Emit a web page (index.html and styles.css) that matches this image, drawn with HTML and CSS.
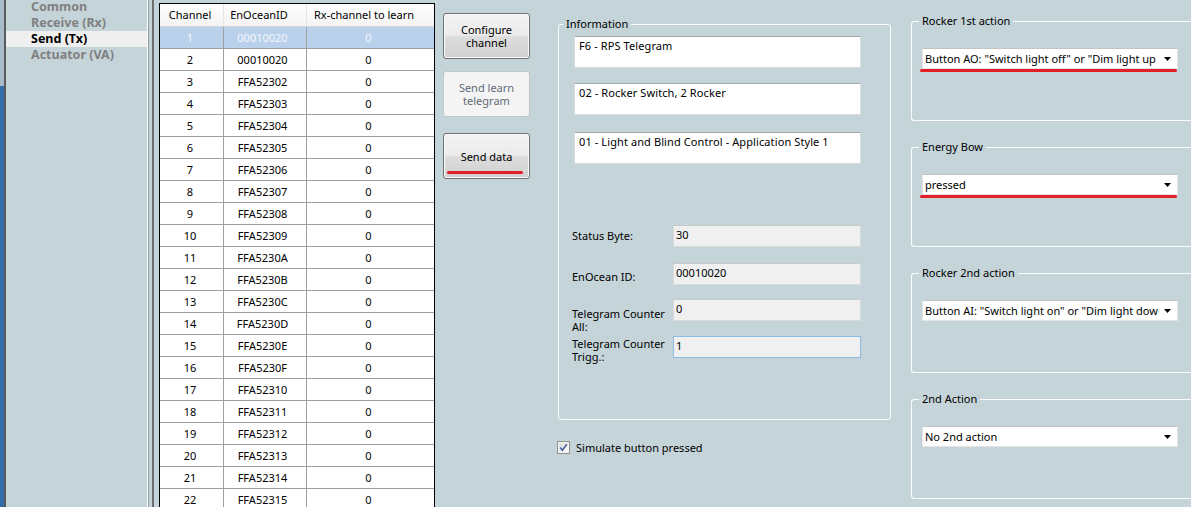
FILE: index.html
```html
<!DOCTYPE html>
<html>
<head>
<meta charset="utf-8">
<link rel="stylesheet" href="styles.css">
</head>
<body>
<div class="strip"></div>
<div class="nav">
  <div class="nav-item first">Common</div>
  <div class="nav-item">Receive (Rx)</div>
  <div class="nav-item active">Send (Tx)</div>
  <div class="nav-item">Actuator (VA)</div>
</div>
<div class="splitter"></div>

<div class="grid">
  <div class="ghead">
    <div class="hc c1">Channel</div>
    <div class="hc c2">EnOceanID</div>
    <div class="hc c3">Rx-channel to learn</div>
  </div>
  <div class="grow sel"><div class="gc c1">1</div><div class="gc c2">00010020</div><div class="gc c3">0</div></div>
  <div class="grow"><div class="gc c1">2</div><div class="gc c2">00010020</div><div class="gc c3">0</div></div>
  <div class="grow"><div class="gc c1">3</div><div class="gc c2">FFA52302</div><div class="gc c3">0</div></div>
  <div class="grow"><div class="gc c1">4</div><div class="gc c2">FFA52303</div><div class="gc c3">0</div></div>
  <div class="grow"><div class="gc c1">5</div><div class="gc c2">FFA52304</div><div class="gc c3">0</div></div>
  <div class="grow"><div class="gc c1">6</div><div class="gc c2">FFA52305</div><div class="gc c3">0</div></div>
  <div class="grow"><div class="gc c1">7</div><div class="gc c2">FFA52306</div><div class="gc c3">0</div></div>
  <div class="grow"><div class="gc c1">8</div><div class="gc c2">FFA52307</div><div class="gc c3">0</div></div>
  <div class="grow"><div class="gc c1">9</div><div class="gc c2">FFA52308</div><div class="gc c3">0</div></div>
  <div class="grow"><div class="gc c1">10</div><div class="gc c2">FFA52309</div><div class="gc c3">0</div></div>
  <div class="grow"><div class="gc c1">11</div><div class="gc c2">FFA5230A</div><div class="gc c3">0</div></div>
  <div class="grow"><div class="gc c1">12</div><div class="gc c2">FFA5230B</div><div class="gc c3">0</div></div>
  <div class="grow"><div class="gc c1">13</div><div class="gc c2">FFA5230C</div><div class="gc c3">0</div></div>
  <div class="grow"><div class="gc c1">14</div><div class="gc c2">FFA5230D</div><div class="gc c3">0</div></div>
  <div class="grow"><div class="gc c1">15</div><div class="gc c2">FFA5230E</div><div class="gc c3">0</div></div>
  <div class="grow"><div class="gc c1">16</div><div class="gc c2">FFA5230F</div><div class="gc c3">0</div></div>
  <div class="grow"><div class="gc c1">17</div><div class="gc c2">FFA52310</div><div class="gc c3">0</div></div>
  <div class="grow"><div class="gc c1">18</div><div class="gc c2">FFA52311</div><div class="gc c3">0</div></div>
  <div class="grow"><div class="gc c1">19</div><div class="gc c2">FFA52312</div><div class="gc c3">0</div></div>
  <div class="grow"><div class="gc c1">20</div><div class="gc c2">FFA52313</div><div class="gc c3">0</div></div>
  <div class="grow"><div class="gc c1">21</div><div class="gc c2">FFA52314</div><div class="gc c3">0</div></div>
  <div class="grow"><div class="gc c1">22</div><div class="gc c2">FFA52315</div><div class="gc c3">0</div></div>
</div>

<div class="buttons">
  <div class="btn b1">Configure<br>channel</div>
  <div class="btn b2 disabled">Send learn<br>telegram</div>
  <div class="btn b3">Send data<span class="redmark"></span></div>
</div>

<div class="infocol">
  <div class="group info">
    <div class="legend">Information</div>
    <div class="tbox t1">F6 - RPS Telegram</div>
    <div class="tbox t2">02 - Rocker Switch, 2 Rocker</div>
    <div class="tbox t3">01 - Light and Blind Control - Application Style 1</div>
    <div class="frow r1"><div class="flabel">Status Byte:</div><div class="field">30</div></div>
    <div class="frow r2"><div class="flabel">EnOcean ID:</div><div class="field">00010020</div></div>
    <div class="frow r3"><div class="flabel">Telegram Counter<br>All:</div><div class="field">0</div></div>
    <div class="frow r4"><div class="flabel">Telegram Counter<br>Trigg.:</div><div class="field focus">1</div></div>
  </div>
  <div class="check">
    <svg class="cbox" width="13" height="13" viewBox="0 0 13 13">
      <defs><linearGradient id="cg" x1="0" y1="0" x2="1" y2="1"><stop offset="0" stop-color="#dcdcdc"/><stop offset="1" stop-color="#fbfbfb"/></linearGradient></defs>
      <rect x="0.5" y="0.5" width="12" height="12" fill="#f4f4f4" stroke="#8e8f8f"/>
      <rect x="2" y="2" width="9" height="9" fill="url(#cg)"/>
      <path d="M3.2 6.6 L5.4 9.2 L9.8 3.2" fill="none" stroke="#4a5f97" stroke-width="1.6"/>
    </svg>
    <span>Simulate button pressed</span>
  </div>
</div>

<div class="rightcol">
  <div class="group rg">
    <div class="legend">Rocker 1st action</div>
    <div class="combo"><span class="ctext">Button AO: "Switch light off" or "Dim light up</span><svg class="arrow" width="7" height="4" viewBox="0 0 7 4"><path d="M0 0 H7 L3.5 4 Z" fill="#000"/></svg></div>
    <div class="redline"></div>
  </div>
  <div class="group rg">
    <div class="legend">Energy Bow</div>
    <div class="combo"><span class="ctext">pressed</span><svg class="arrow" width="7" height="4" viewBox="0 0 7 4"><path d="M0 0 H7 L3.5 4 Z" fill="#000"/></svg></div>
    <div class="redline"></div>
  </div>
  <div class="group rg">
    <div class="legend">Rocker 2nd action</div>
    <div class="combo"><span class="ctext">Button AI: "Switch light on" or "Dim light dow</span><svg class="arrow" width="7" height="4" viewBox="0 0 7 4"><path d="M0 0 H7 L3.5 4 Z" fill="#000"/></svg></div>
  </div>
  <div class="group rg">
    <div class="legend">2nd Action</div>
    <div class="combo"><span class="ctext">No 2nd action</span><svg class="arrow" width="7" height="4" viewBox="0 0 7 4"><path d="M0 0 H7 L3.5 4 Z" fill="#000"/></svg></div>
  </div>
</div>
</body>
</html>
```
FILE: styles.css
```css
* { box-sizing: border-box; }
html, body { margin: 0; padding: 0; }
body {
  width: 1191px;
  height: 507px;
  overflow: hidden;
  background: #c5d4d9;
  font-family: "Noto Sans", "Open Sans", sans-serif;
  font-size: 11px;
  color: #000;
  display: flex;
  align-items: flex-start;
}

.strip {
  width: 6px;
  height: 507px;
  flex: none;
  background: linear-gradient(to bottom, #a9bccb 0, #a9bccb 86px, #2f6eab 86px);
  border-right: 2px solid #5b5b5b;
}

.nav { width: 141px; height: 507px; flex: none; }
.nav-item {
  height: 16px;
  line-height: 16px;
  padding-left: 25px;
  font-weight: bold;
  font-size: 12.5px;
  color: #808080;
}
.nav-item.first { margin-top: -1px; }
.nav-item.active { background: #efefef; color: #000; }

.splitter {
  width: 12px;
  height: 507px;
  flex: none;
  background: linear-gradient(to right, #ffffff 0 1px, #8d9ca3 1px 2px, #c5d4d9 2px 5px, #6e6e6e 5px 7px, #c5d4d9 7px 12px);
}

/* data grid */
.grid {
  width: 276px;
  height: 520px;
  flex: none;
  margin-top: 3px;
  border: 1px solid #000;
  background: #fff;
  overflow: hidden;
}
.ghead, .grow {
  display: grid;
  grid-template-columns: 64px 83px 127px;
}
.ghead {
  height: 23px;
  border-bottom: 1px solid #d5d5d5;
  background: linear-gradient(to bottom, #ffffff, #f3f3f3);
}
.hc {
  line-height: 22px;
  text-align: center;
  border-right: 1px solid #e6e6e6;
}
.hc.c1 { padding-right: 3px; }
.hc.c2 { padding-right: 12px; }
.hc.c3 { padding-right: 13px; border-right: none; }
.grow {
  height: 22px;
  border-bottom: 1px solid #a0a0a0;
}
.gc {
  line-height: 21px;
  text-align: center;
  border-right: 1px solid #a0a0a0;
  padding-right: 3px;
}
.gc.c2 { padding-right: 5px; }
.gc.c3 { border-right: none; padding-right: 4px; }
.grow.sel { background: #b9d1ea; color: #f4f7fb; }

/* buttons */
.buttons {
  width: 87px;
  flex: none;
  margin-left: 8px;
  margin-top: 13px;
  display: flex;
  flex-direction: column;
}
.btn {
  position: relative;
  height: 46px;
  border: 1px solid #707070;
  border-radius: 3px;
  background: linear-gradient(to bottom, #f3f3f3 0%, #ebebeb 48%, #dddddd 52%, #d0d0d0 100%);
  box-shadow: inset 0 0 0 1px #fbfbfb;
  display: flex;
  align-items: center;
  justify-content: center;
  text-align: center;
  line-height: 13px;
}
.btn.b2 { margin-top: 12px; }
.btn.b3 { margin-top: 16px; }
.btn.disabled {
  background: #f4f4f4;
  border-color: #c2c6c8;
  box-shadow: none;
  color: #5f6b74;
}
.redmark {
  position: absolute;
  left: 3px;
  top: 37px;
  width: 76px;
  height: 3px;
  border-radius: 2px;
  background: #e41e26;
}

/* group boxes */
.group {
  position: relative;
  border: 1px solid #fbfdfd;
  border-radius: 3px;
}
.legend {
  position: absolute;
  top: -9px;
  left: 4px;
  padding: 0 3px;
  line-height: 16px;
  background: #c5d4d9;
  white-space: nowrap;
}

.infocol {
  width: 333px;
  flex: none;
  margin-left: 28px;
  margin-top: 24px;
}
.info {
  height: 396px;
  padding-left: 13px;
}
.tbox {
  width: 287px;
  height: 32px;
  margin-left: 2px;
  background: #fff;
  border: 1px solid #dcdcdc;
  border-top-color: #a7a7a7;
  padding: 2px 0 0 4px;
  line-height: 14px;
  letter-spacing: 0.1px;
}
.tbox.t1 { margin-top: 11px; }
.tbox.t2 { margin-top: 15px; }
.tbox.t3 { margin-top: 17px; }

.frow {
  display: flex;
  height: 22px;
}
.frow.r1 { margin-top: 61px; }
.frow.r2 { margin-top: 16px; }
.frow.r3 { margin-top: 14px; }
.frow.r4 { margin-top: 15px; }
.flabel {
  width: 101px;
  flex: none;
  line-height: 13px;
  white-space: nowrap;
}
.r1 .flabel { padding-top: 4px; }
.r2 .flabel { padding-top: 7px; }
.r3 .flabel { padding-top: 8px; }
.r4 .flabel { padding-top: 1px; }
.field {
  width: 188px;
  height: 22px;
  background: #f0f0f0;
  border: 1px solid #dadada;
  border-top-color: #c9c9c9;
  padding: 2px 0 0 2px;
  line-height: 14px;
}
.field.focus { border-color: #8cbbe6; }

.check {
  display: flex;
  align-items: center;
  margin-top: 21px;
  margin-left: -1px;
  height: 13px;
}
.cbox { flex: none; display: block; }
.check span { margin-left: 6px; line-height: 13px; }

/* right column */
.rightcol {
  width: 300px;
  flex: none;
  margin-left: 20px;
  margin-top: 21px;
}
.rg {
  height: 100px;
  margin-bottom: 26px;
  padding-top: 26px;
  padding-left: 10px;
  border-right: none;
}
.rg .legend { left: 7px; }
.combo {
  width: 256px;
  height: 21px;
  background: #fff;
  border: 1px solid #e4e4e4;
  border-top-color: #c3c3c3;
  display: flex;
  align-items: center;
  padding-left: 2px;
  padding-right: 6px;
}
.ctext {
  flex: 1;
  white-space: nowrap;
  line-height: 19px;
  margin-right: 4px;
}
.arrow { flex: none; display: block; }
.redline {
  width: 257px;
  height: 3px;
  margin-left: -2px;
  border-radius: 2px;
  background: #e41e26;
}
```
